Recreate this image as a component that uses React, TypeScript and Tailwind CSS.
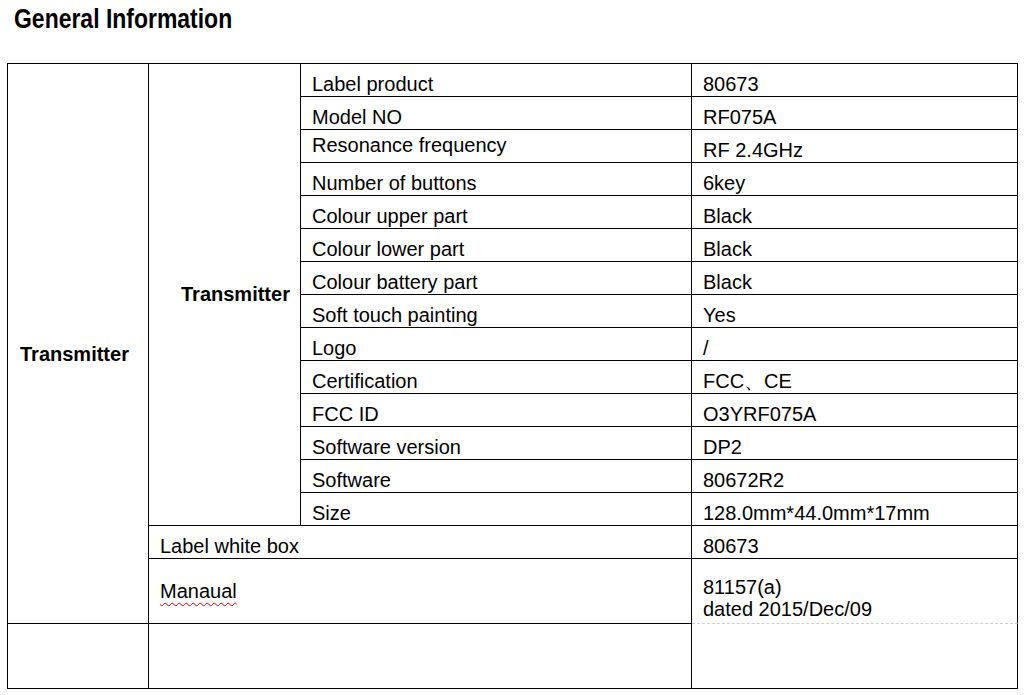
const specs = [
  ["Label product", "80673"],
  ["Model NO", "RF075A"],
  ["Resonance frequency", "RF 2.4GHz"],
  ["Number of buttons", "6key"],
  ["Colour upper part", "Black"],
  ["Colour lower part", "Black"],
  ["Colour battery part", "Black"],
  ["Soft touch painting", "Yes"],
  ["Logo", "/"],
  ["Certification", "FCC、CE"],
  ["FCC ID", "O3YRF075A"],
  ["Software version", "DP2"],
  ["Software", "80672R2"],
  ["Size", "128.0mm*44.0mm*17mm"],
];

export default function App() {
  return (
    <div className="min-h-[695px] w-[1025px] bg-white text-black font-['Liberation_Sans',Arial,sans-serif]">
      <div className="h-[63px] pl-[14px] pt-[3px]">
        <h1 className="block origin-left scale-x-[0.82] text-[28px] font-bold leading-[32px] whitespace-nowrap">
          General Information
        </h1>
      </div>

      <div className="ml-[7px] grid w-[1011px] grid-cols-[141px_152px_391px_326px] grid-rows-[repeat(15,33px)_65px_65px] border-l border-t border-black text-[20px] leading-[23px]">
        <div className="col-start-1 row-start-1 row-end-17 flex items-center border-b border-r border-black pl-[12px] pt-[21px] font-bold">
          Transmitter
        </div>
        <div className="col-start-2 row-start-1 row-end-15 flex items-center border-b border-r border-black pl-[32px] font-bold">
          Transmitter
        </div>

        {specs.map(([label, value]) => (
          <div key={label} className="contents">
            <div
              className={
                label === "Resonance frequency"
                  ? "col-start-3 border-b border-r border-black pl-[11px] pt-[4px] whitespace-nowrap"
                  : "col-start-3 border-b border-r border-black pl-[11px] pt-[9px] whitespace-nowrap"
              }
            >
              {label}
            </div>
            <div className="col-start-4 border-b border-r border-black pl-[11px] pt-[9px] whitespace-nowrap">
              {value}
            </div>
          </div>
        ))}

        <div className="col-start-2 col-end-4 border-b border-r border-black pl-[11px] pt-[9px]">
          Label white box
        </div>
        <div className="col-start-4 border-b border-r border-black pl-[11px] pt-[9px]">80673</div>

        <div className="col-start-2 col-end-4 flex items-center border-b border-r border-black pl-[11px]">
          <span className="underline decoration-red-600 decoration-wavy decoration-1 underline-offset-[4px]">
            Manaual
          </span>
        </div>
        <div className="col-start-4 border-b border-r border-r-black border-b-[#cfcfcf] [border-bottom-style:dashed] pl-[11px] pt-[17px] leading-[22px]">
          <div>81157(a)</div>
          <div>dated 2015/Dec/09</div>
        </div>

        <div className="col-start-1 border-b border-r border-black" />
        <div className="col-start-2 col-end-4 border-b border-r border-black" />
        <div className="col-start-4 border-b border-r border-black" />
      </div>
    </div>
  );
}
